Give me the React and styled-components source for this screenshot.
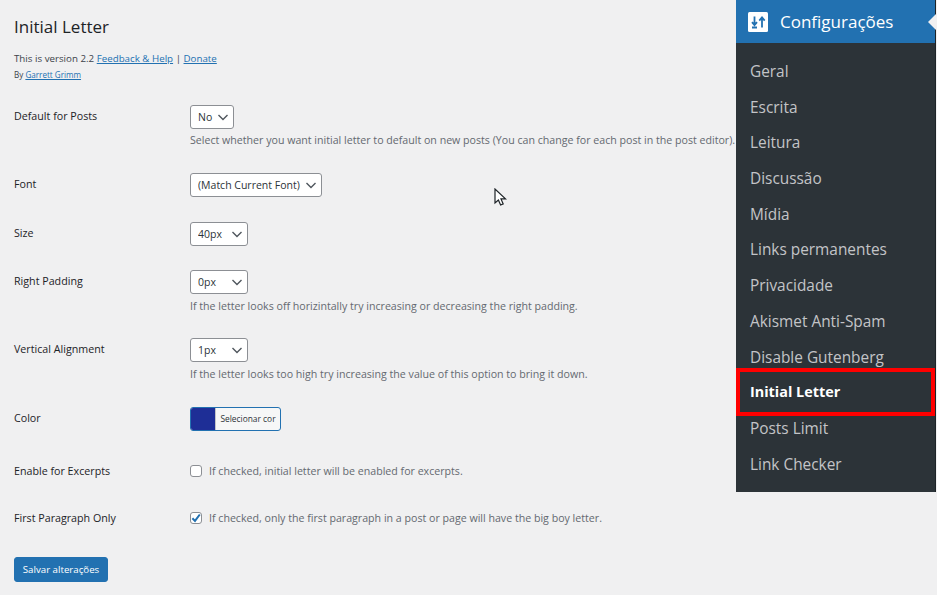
import React from "react";
import styled, { createGlobalStyle } from "styled-components";

const GlobalStyle = createGlobalStyle`
  html, body {
    margin: 0;
    padding: 0;
    background: #f0f0f1;
  }
  body {
    font-family: "Open Sans", "Noto Sans", sans-serif;
    color: #1d2327;
    overflow: hidden;
  }
`;

const chevron = `url("data:image/svg+xml,%3Csvg xmlns='http://www.w3.org/2000/svg' width='12' height='12' viewBox='0 0 12 12'%3E%3Cpath d='M1.5 4l4.5 4.5L10.5 4' fill='none' stroke='%2350575e' stroke-width='1.4'/%3E%3C/svg%3E")`;
const tick = `url("data:image/svg+xml,%3Csvg xmlns='http://www.w3.org/2000/svg' width='12' height='12' viewBox='0 0 12 12'%3E%3Cpath d='M2.4 6.2l2.6 2.7 4.8-6.4' fill='none' stroke='%232271b1' stroke-width='2'/%3E%3C/svg%3E")`;

const Page = styled.div`
  display: flex;
  width: 937px;
  height: 595px;
  position: relative;
  overflow: hidden;
`;

const Main = styled.main`
  width: 736px;
  flex: none;
  box-sizing: border-box;
  padding: 15px 0 0 14px;
`;

const Title = styled.h1`
  margin: 0;
  font-size: 17px;
  line-height: 24px;
  font-weight: 400;
  color: #1d2327;
`;

const Meta = styled.p`
  margin: ${(p) => p.$top}px 0 0;
  font-size: ${(p) => p.$size}px;
  line-height: 14px;
  color: #3c434a;

  a {
    color: #2271b1;
    text-decoration: underline;
  }
`;

const Form = styled.form`
  margin-top: 23px;
`;

const Row = styled.div`
  display: grid;
  grid-template-columns: 176px 1fr;
  padding-bottom: ${(p) => p.$gap}px;
`;

const Label = styled.label`
  font-size: 10.7px;
  line-height: 14px;
  font-weight: 500;
  padding-top: ${(p) => p.$top ?? 4}px;
  color: #1d2327;
`;

const Field = styled.div`
  display: flex;
  flex-direction: column;
  align-items: flex-start;
`;

const Select = styled.select`
  appearance: none;
  box-sizing: border-box;
  width: ${(p) => p.$width}px;
  height: 24px;
  margin: 0;
  padding: 0 20px 0 7px;
  border: 1px solid #8c8f94;
  border-radius: 3px;
  background: #fff ${chevron} no-repeat right 4px center;
  font-family: inherit;
  font-size: 10.5px;
  color: #2c3338;
`;

const Description = styled.p`
  margin: ${(p) => p.$top ?? 4}px 0 0;
  height: 16px;
  font-size: 10.64px;
  line-height: 16px;
  white-space: nowrap;
  color: #646970;
`;

const ColorButton = styled.button`
  display: flex;
  align-items: stretch;
  box-sizing: border-box;
  width: 91px;
  height: 24px;
  padding: 0;
  border: 1px solid #2271b1;
  border-radius: 3px;
  background: #f6f7f7;
  overflow: hidden;
  font-family: inherit;
`;

const Swatch = styled.span`
  width: 24px;
  flex: none;
  background: ${(p) => p.$color};
`;

const ColorText = styled.span`
  flex: 1;
  border-left: 1px solid #c3c4c7;
  font-size: 8.4px;
  line-height: 22px;
  color: #2c3338;
  text-align: center;
`;

const CheckRow = styled.label`
  display: flex;
  align-items: center;
  gap: 7px;
  min-height: 16px;
  font-size: 10.64px;
  color: #646970;
`;

const Check = styled.input`
  appearance: none;
  box-sizing: border-box;
  width: 12px;
  height: 12px;
  margin: 0;
  flex: none;
  border: 1px solid #8c8f94;
  border-radius: 3px;
  background: #fff no-repeat center;

  &:checked {
    background-image: ${tick};
  }
`;

const SaveButton = styled.button`
  display: block;
  box-sizing: border-box;
  width: 94px;
  height: 25px;
  padding: 0;
  border: 1px solid #2271b1;
  border-radius: 3px;
  background: #2271b1;
  color: #fff;
  font-family: inherit;
  font-size: 9.7px;
  font-weight: 500;
`;

const Sidebar = styled.aside`
  width: 199px;
  height: 492px;
  flex: none;
  background: #2c3338;
  box-shadow: 1px 0 0 #1d2327;
`;

const MenuHead = styled.div`
  position: relative;
  display: flex;
  align-items: center;
  gap: 12px;
  height: 43px;
  padding-left: 12px;
  background: #2271b1;
  color: #fff;
  font-size: 17px;
`;

const HeadIcon = styled.svg`
  margin-top: 1px;
  flex: none;
`;

const Notch = styled.span`
  position: absolute;
  right: -2px;
  top: 13px;
  width: 0;
  height: 0;
  border-top: 9px solid transparent;
  border-bottom: 9px solid transparent;
  border-right: 9px solid #f0f0f1;
`;

const MenuList = styled.ul`
  list-style: none;
  margin: 0;
  padding: 11px 0 0;
`;

const MenuItem = styled.li`
  position: relative;
  height: 35.7px;
  padding-left: 14px;
  font-size: ${(p) => (p.$active ? 14.4 : 15.4)}px;
  line-height: ${(p) => (p.$active ? 34 : 35.7)}px;
  font-weight: ${(p) => (p.$active ? 700 : 400)};
  color: ${(p) => (p.$active ? "#fff" : "#c3c4c7")};

  ${(p) =>
    p.$active &&
    `&::after {
      content: "";
      position: absolute;
      left: 0;
      right: 0;
      top: -7px;
      bottom: -5px;
      border: 4px solid #f00;
    }`}
`;

const Cursor = styled.svg`
  position: absolute;
  left: 494px;
  top: 188px;
`;

const SettingsIcon = () => (
  <HeadIcon width="20" height="20" viewBox="0 0 20 20">
    <rect width="20" height="20" rx="1.5" fill="#fff" />
    <path
      d="M6.5 4.5v8M4 10.2l2.5 3 2.5-3M14 15.5V6M11.3 8.6l2.7-3.3 2.7 3.3M4 15.5h5"
      fill="none"
      stroke="#2271b1"
      strokeWidth="1.8"
    />
  </HeadIcon>
);

const menu = [
  "Geral",
  "Escrita",
  "Leitura",
  "Discussão",
  "Mídia",
  "Links permanentes",
  "Privacidade",
  "Akismet Anti-Spam",
  "Disable Gutenberg",
  "Initial Letter",
  "Posts Limit",
  "Link Checker",
];

const App = () => (
  <>
    <GlobalStyle />
    <Page>
      <Main>
        <Title>Initial Letter</Title>
        <Meta $top={13} $size={9.75}>
          This is version 2.2 <a href="#feedback">Feedback &amp; Help</a> |{" "}
          <a href="#donate">Donate</a>
        </Meta>
        <Meta $top={2} $size={8.1}>
          By <a href="#author">Garrett Grimm</a>
        </Meta>
        <Form>
          <Row $gap={25}>
            <Label>Default for Posts</Label>
            <Field>
              <Select $width={44} defaultValue="No">
                <option>No</option>
                <option>Yes</option>
              </Select>
              <Description $top={3}>
                Select whether you want initial letter to default on new posts
                (You can change for each post in the post editor).
              </Description>
            </Field>
          </Row>
          <Row $gap={25}>
            <Label>Font</Label>
            <Field>
              <Select $width={132} defaultValue="match">
                <option value="match">(Match Current Font)</option>
              </Select>
            </Field>
          </Row>
          <Row $gap={24}>
            <Label>Size</Label>
            <Field>
              <Select $width={58} defaultValue="40px">
                <option>40px</option>
              </Select>
            </Field>
          </Row>
          <Row $gap={24}>
            <Label>Right Padding</Label>
            <Field>
              <Select $width={58} defaultValue="0px">
                <option>0px</option>
              </Select>
              <Description>
                If the letter looks off horizintally try increasing or
                decreasing the right padding.
              </Description>
            </Field>
          </Row>
          <Row $gap={25}>
            <Label>Vertical Alignment</Label>
            <Field>
              <Select $width={58} defaultValue="1px">
                <option>1px</option>
              </Select>
              <Description>
                If the letter looks too high try increasing the value of this
                option to bring it down.
              </Description>
            </Field>
          </Row>
          <Row $gap={32}>
            <Label>Color</Label>
            <Field>
              <ColorButton type="button">
                <Swatch $color="#1e2e96" />
                <ColorText>Selecionar cor</ColorText>
              </ColorButton>
            </Field>
          </Row>
          <Row $gap={31}>
            <Label $top={1}>Enable for Excerpts</Label>
            <Field>
              <CheckRow>
                <Check type="checkbox" />
                If checked, initial letter will be enabled for excerpts.
              </CheckRow>
            </Field>
          </Row>
          <Row $gap={31}>
            <Label $top={1}>First Paragraph Only</Label>
            <Field>
              <CheckRow>
                <Check type="checkbox" defaultChecked />
                If checked, only the first paragraph in a post or page will
                have the big boy letter.
              </CheckRow>
            </Field>
          </Row>
          <SaveButton type="button">Salvar alterações</SaveButton>
        </Form>
      </Main>
      <Sidebar>
        <MenuHead>
          <SettingsIcon />
          Configurações
          <Notch />
        </MenuHead>
        <MenuList>
          {menu.map((item) => (
            <MenuItem key={item} $active={item === "Initial Letter"}>
              {item}
            </MenuItem>
          ))}
        </MenuList>
      </Sidebar>
      <Cursor width="14" height="20" viewBox="0 0 14 20">
        <path
          d="M1 1v14l3.4-3 2.2 5 2.6-1.1-2.2-5h4.5z"
          fill="#fff"
          stroke="#1d2327"
          strokeWidth="1.2"
        />
      </Cursor>
    </Page>
  </>
);

export default App;
